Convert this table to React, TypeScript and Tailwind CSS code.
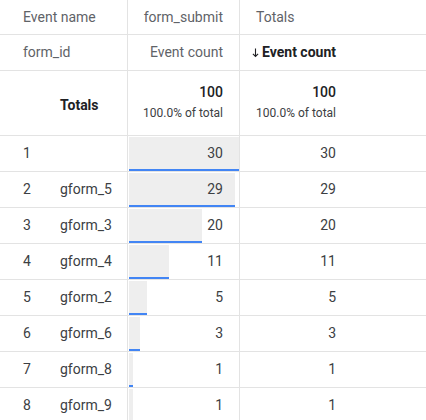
import React from "react";

const rows = [
  { n: 1, id: "", v: 30 },
  { n: 2, id: "gform_5", v: 29 },
  { n: 3, id: "gform_3", v: 20 },
  { n: 4, id: "gform_4", v: 11 },
  { n: 5, id: "gform_2", v: 5 },
  { n: 6, id: "gform_6", v: 3 },
  { n: 7, id: "gform_8", v: 1 },
  { n: 8, id: "gform_9", v: 1 },
];

function DownArrow() {
  return (
    <svg width="7" height="10" viewBox="0 0 7 10" className="mr-[3px] shrink-0">
      <path d="M3.5 0.5 V8.5 M0.9 5.9 L3.5 8.5 L6.1 5.9" fill="none" stroke="#202124" strokeWidth="1.1" />
    </svg>
  );
}

export default function App() {
  return (
    <div
      className="w-[426px] h-[420px] overflow-hidden bg-white text-[14px] text-[#3c4043]"
      style={{ fontFamily: "Roboto, 'Liberation Sans', Arial, sans-serif" }}
    >
      {/* header row 1 */}
      <div className="flex h-[35px] border-b border-[#e3e3e3]">
        <div className="w-[128px] border-r border-[#e3e3e3] flex items-center pl-[23px] text-[#5f6368]">Event name</div>
        <div className="w-[112px] border-r border-[#e3e3e3] flex items-center justify-end pr-[16px] text-[#5f6368]">form_submit</div>
        <div className="w-[112px] flex items-center pl-[16px] text-[#5f6368]">Totals</div>
        <div className="flex-1" />
      </div>
      {/* header row 2 */}
      <div className="flex h-[36px] border-b border-[#e3e3e3]">
        <div className="w-[128px] border-r border-[#e3e3e3] flex items-center pl-[23px] text-[#5f6368]">form_id</div>
        <div className="w-[112px] border-r border-[#e3e3e3] flex items-center justify-end pr-[16px] text-[#5f6368]">Event count</div>
        <div className="w-[112px] flex items-center justify-end pr-[16px] font-bold text-[#202124]">
          <DownArrow />
          Event count
        </div>
        <div className="flex-1" />
      </div>
      {/* totals row */}
      <div className="flex h-[65px] border-b border-[#e3e3e3]">
        <div className="w-[128px] border-r border-[#e3e3e3] flex items-center pl-[60px] pt-[4px] font-bold text-[#202124]">Totals</div>
        <div className="w-[112px] border-r border-[#e3e3e3] flex flex-col justify-center items-end pr-[16px] pb-[4px]">
          <div className="font-medium text-[#202124] leading-[20px]">100</div>
          <div className="text-[12px] leading-[16px] mt-[3px]">100.0% of total</div>
        </div>
        <div className="w-[112px] flex flex-col justify-center items-end pr-[16px] pb-[4px]">
          <div className="font-medium text-[#202124] leading-[20px]">100</div>
          <div className="text-[12px] leading-[16px] mt-[3px]">100.0% of total</div>
        </div>
        <div className="flex-1" />
      </div>
      {rows.map((r) => (
        <div key={r.n} className="flex h-[36px] border-b border-[#e3e3e3]">
          <div className="w-[128px] border-r border-[#e3e3e3] flex items-center">
            <div className="w-[60px] shrink-0 pl-[23px] text-[#3c4043]">{r.n}</div>
            <div className="text-[#3c4043]">{r.id}</div>
          </div>
          <div className="relative w-[112px] border-r border-[#e3e3e3] flex items-center justify-end pr-[16px]">
            <div
              className="absolute left-[1px] top-[1px] bottom-0 bg-[#eeeeee] border-b-2 border-[#4285f4]"
              style={{ width: `${(r.v / 30) * 110}px` }}
            />
            <span className="relative">{r.v}</span>
          </div>
          <div className="w-[112px] flex items-center justify-end pr-[16px]">{r.v}</div>
          <div className="flex-1" />
        </div>
      ))}
    </div>
  );
}
